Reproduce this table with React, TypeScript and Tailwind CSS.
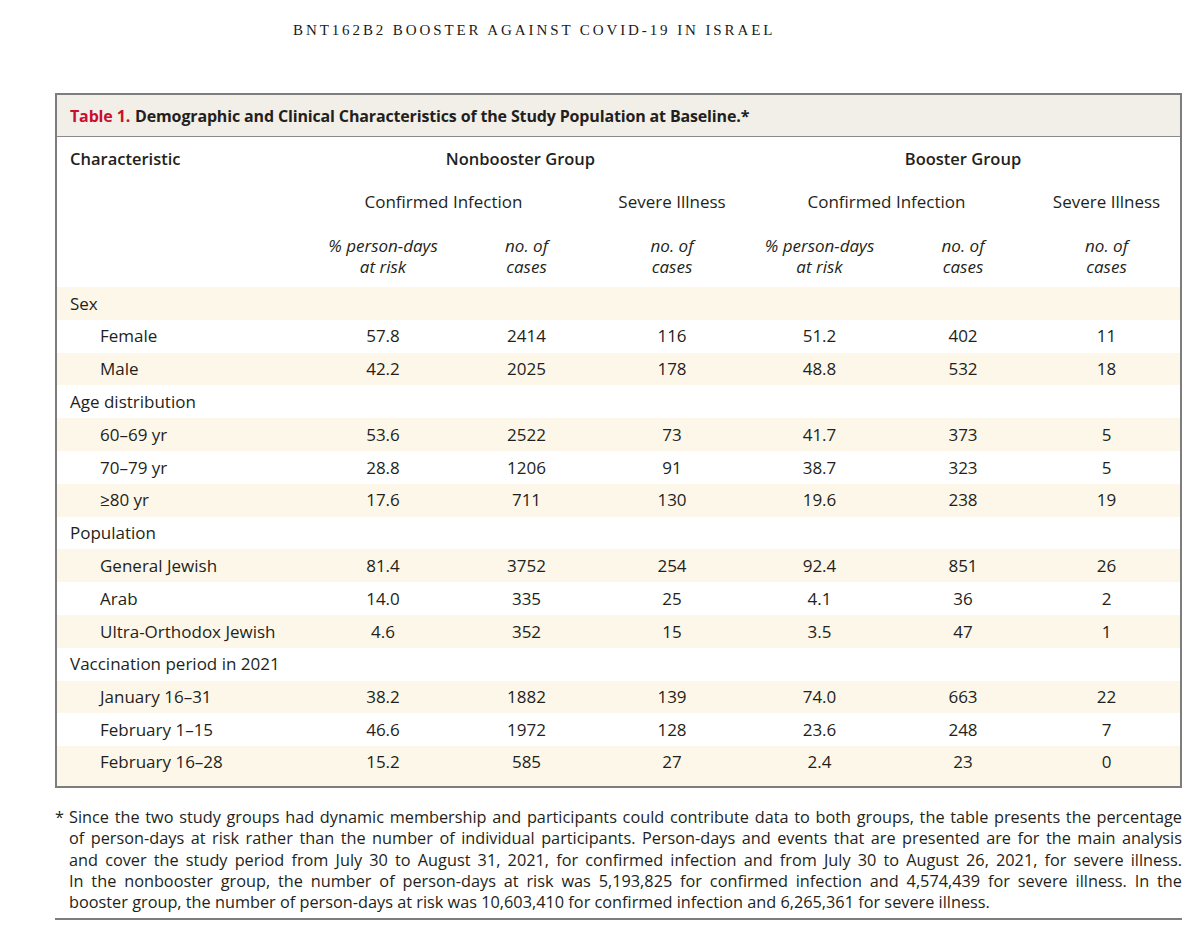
const rows: { label: string; sub?: boolean; v?: string[] }[] = [
  { label: "Sex" },
  { label: "Female", sub: true, v: ["57.8", "2414", "116", "51.2", "402", "11"] },
  { label: "Male", sub: true, v: ["42.2", "2025", "178", "48.8", "532", "18"] },
  { label: "Age distribution" },
  { label: "60–69 yr", sub: true, v: ["53.6", "2522", "73", "41.7", "373", "5"] },
  { label: "70–79 yr", sub: true, v: ["28.8", "1206", "91", "38.7", "323", "5"] },
  { label: "≥80 yr", sub: true, v: ["17.6", "711", "130", "19.6", "238", "19"] },
  { label: "Population" },
  { label: "General Jewish", sub: true, v: ["81.4", "3752", "254", "92.4", "851", "26"] },
  { label: "Arab", sub: true, v: ["14.0", "335", "25", "4.1", "36", "2"] },
  { label: "Ultra-Orthodox Jewish", sub: true, v: ["4.6", "352", "15", "3.5", "47", "1"] },
  { label: "Vaccination period in 2021" },
  { label: "January 16–31", sub: true, v: ["38.2", "1882", "139", "74.0", "663", "22"] },
  { label: "February 1–15", sub: true, v: ["46.6", "1972", "128", "23.6", "248", "7"] },
  { label: "February 16–28", sub: true, v: ["15.2", "585", "27", "2.4", "23", "0"] },
];

const footnote = [
  "Since the two study groups had dynamic membership and participants could contribute data to both groups, the table presents the percentage",
  "of person-days at risk rather than the number of individual participants. Person-days and events that are presented are for the main analysis",
  "and cover the study period from July 30 to August 31, 2021, for confirmed infection and from July 30 to August 26, 2021, for severe illness.",
  "In the nonbooster group, the number of person-days at risk was 5,193,825 for confirmed infection and 4,574,439 for severe illness. In the",
  "booster group, the number of person-days at risk was 10,603,410 for confirmed infection and 6,265,361 for severe illness.",
];

const cols = "grid grid-cols-[254px_144px_143px_148px_147px_140px_1fr]";

function SubHead({ a, b }: { a: string; b: string }) {
  return (
    <div className="text-center italic leading-[21px]">
      <div>{a}</div>
      <div>{b}</div>
    </div>
  );
}

export default function App() {
  return (
    <div className="min-h-[926px] w-[1200px] bg-white text-[#231f20] font-['Open_Sans',sans-serif] text-[17px]">
      <div className="pl-[293px] pt-[20px] h-[93px] font-['Liberation_Serif',serif] text-[15px] tracking-[2.9px] uppercase leading-[20px] text-[#1a1a1a]">
        BNT162B2 Booster against Covid-19 in Israel
      </div>

      <div className="ml-[55px] w-[1127px] border-2 border-[#7d7d7d]">
        <div className="h-[42px] bg-[#f2efe8] border-b border-[#8a8a8a] pl-[13px] flex items-center font-bold text-[16px] tracking-[-0.15px]">
          <span className="text-[#c8102e] mr-[5px]">Table 1.</span>
          <span>Demographic and Clinical Characteristics of the Study Population at Baseline.*</span>
        </div>

        <div className={`${cols} h-[44px] items-center font-semibold text-[16.5px]`}>
          <div className="pl-[13px]">Characteristic</div>
          <div className="col-span-3 text-center pr-[16px]">Nonbooster Group</div>
          <div className="col-span-3 text-center">Booster Group</div>
        </div>
        <div className={`${cols} h-[42px] items-center`}>
          <div />
          <div className="col-span-2 text-center pr-[22px]">Confirmed Infection</div>
          <div className="text-center">Severe Illness</div>
          <div className="col-span-2 text-center pr-[6px]">Confirmed Infection</div>
          <div className="text-center">Severe Illness</div>
        </div>
        <div className={`${cols} pt-[12px] pb-[10px]`}>
          <div />
          <SubHead a="% person-days" b="at risk" />
          <SubHead a="no. of" b="cases" />
          <SubHead a="no. of" b="cases" />
          <SubHead a="% person-days" b="at risk" />
          <SubHead a="no. of" b="cases" />
          <SubHead a="no. of" b="cases" />
        </div>

        {rows.map((r, i) => (
          <div
            key={r.label}
            className={`${cols} items-center ${i % 2 === 0 ? "bg-[#fdf7ea]" : "bg-white"} ${
              i === rows.length - 1 ? "h-[40px] pb-[8px]" : "h-[32.8px]"
            }`}
          >
            <div className={r.sub ? "pl-[43px]" : "pl-[13px]"}>{r.label}</div>
            {r.v?.map((x, j) => (
              <div key={j} className="text-center">
                {x}
              </div>
            ))}
          </div>
        ))}
      </div>

      <div className="ml-[55px] w-[1127px] pt-[19px] pb-[4px] border-b-2 border-[#7d7d7d] text-[16.3px] leading-[21.3px]">
        {footnote.map((line, i) => (
          <div
            key={i}
            className={`pl-[14px] relative ${
              i < footnote.length - 1 ? "text-justify [text-align-last:justify]" : ""
            }`}
          >
            {i === 0 && <span className="absolute left-0 top-0">*</span>}
            {line}
          </div>
        ))}
      </div>
    </div>
  );
}
